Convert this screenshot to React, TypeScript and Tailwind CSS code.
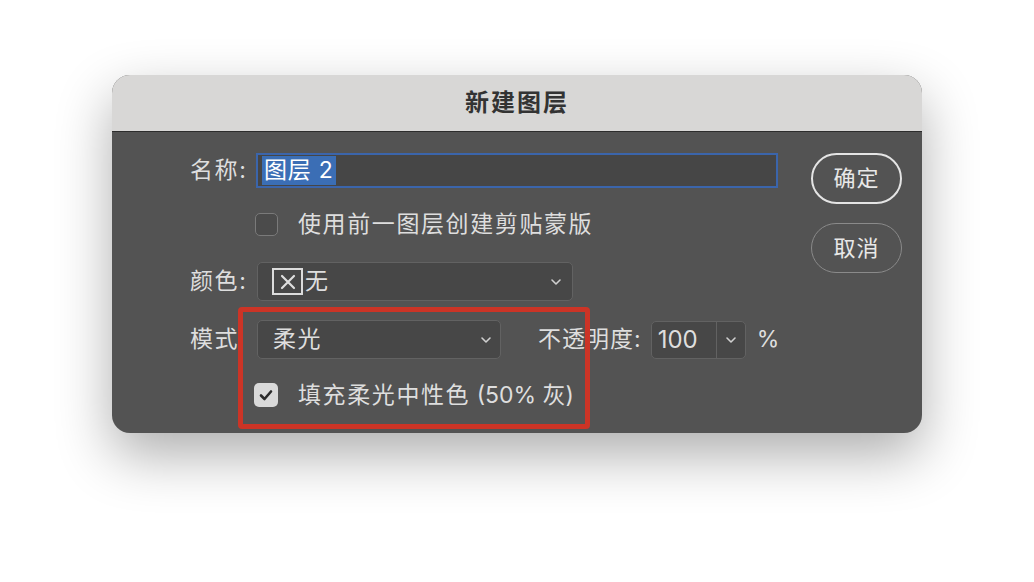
import React from "react";

const font = { fontFamily: '"Inter", "Noto Sans CJK SC", sans-serif' };

function Chevron({ className = "" }: { className?: string }) {
  return (
    <svg width="12" height="8" viewBox="0 0 12 8" className={className}>
      <path d="M2 2 L6 6 L10 2" fill="none" stroke="#d0d0d0" strokeWidth="1.6" strokeLinecap="round" strokeLinejoin="round" />
    </svg>
  );
}

export default function App() {
  return (
    <div className="w-[1034px] h-[582px] bg-white pt-[75px] pl-[112px]" style={font}>
      <div className="w-[810px] h-[358px] rounded-[18px] overflow-hidden bg-[#535353] shadow-[0_22px_55px_rgba(0,0,0,0.32)] flex flex-col">
        <div className="h-[57px] bg-[#d8d7d6] border-b border-[#2c2c2c] flex items-center justify-center">
          <span className="text-[24px] font-bold text-[#333333] tracking-[2px] leading-none">新建图层</span>
        </div>
        <div className="relative flex-1 flex pl-[78px] pr-[20px] pt-[21px]">
          <div className="w-[588px] flex flex-col text-[23px] tracking-[1.6px] text-[#dedede] leading-none whitespace-nowrap">
            {/* Row 1 */}
            <div className="flex items-center h-[35px]">
              <span className="w-[66px] shrink-0">名称:</span>
              <div className="w-[522px] h-[35px] border-2 border-[#3b65ab] bg-[#464646] flex items-stretch p-[1px] pl-[4px]">
                <span className="bg-[#3b6eb5] text-white flex items-center px-[2px] tracking-[0.8px]">图层 2</span>
              </div>
            </div>
            {/* Row 2 */}
            <div className="flex items-center mt-[25px] h-[23px] pl-[65px]">
              <div className="w-[23px] h-[23px] shrink-0 rounded-[5px] border-[1.5px] border-[#7a7a7a] bg-[#4b4b4b]" />
              <span className="ml-[20px]">使用前一图层创建剪贴蒙版</span>
            </div>
            {/* Row 3 */}
            <div className="flex items-center mt-[26px]">
              <span className="w-[67px] shrink-0">颜色:</span>
              <div className="w-[316px] h-[39px] rounded-[5px] border border-[#626262] bg-[#474747] flex items-center pl-[14px] pr-[10px]">
                <div className="w-[31px] h-[27px] border-2 border-[#dcdcdc] flex items-center justify-center">
                  <svg width="16" height="16" viewBox="0 0 16 16">
                    <path d="M2 2 L14 14 M14 2 L2 14" stroke="#dedede" strokeWidth="2.2" strokeLinecap="round" />
                  </svg>
                </div>
                <span className="ml-[2px]">无</span>
                <Chevron className="ml-auto" />
              </div>
            </div>
            {/* Row 4 */}
            <div className="flex items-center mt-[19px]">
              <span className="w-[67px] shrink-0">模式</span>
              <div className="w-[244px] h-[39px] shrink-0 rounded-[5px] border border-[#626262] bg-[#474747] flex items-center pl-[15px] pr-[8px]">
                <span>柔光</span>
                <Chevron className="ml-auto" />
              </div>
              <span className="ml-[37px] shrink-0 tracking-[1px]">不透明度:</span>
              <div className="ml-[9px] w-[95px] h-[38px] shrink-0 rounded-[5px] border border-[#626262] bg-[#474747] flex items-stretch">
                <span className="w-[64px] flex items-center pl-[6px] tracking-normal text-[24px]">100</span>
                <div className="flex-1 border-l border-[#626262] flex items-center justify-center">
                  <Chevron />
                </div>
              </div>
              <span className="ml-[11px] tracking-normal">%</span>
            </div>
            {/* Row 5 */}
            <div className="flex items-center mt-[24px] h-[24px] pl-[64px]">
              <div className="w-[24px] h-[24px] shrink-0 rounded-[5px] bg-[#d9d9d9] flex items-center justify-center">
                <svg width="14" height="12" viewBox="0 0 14 12">
                  <path d="M2 6.5 L5.5 10 L12 2.5" fill="none" stroke="#2b2b2b" strokeWidth="2.6" strokeLinecap="round" strokeLinejoin="round" />
                </svg>
              </div>
              <span className="ml-[20px]">
                {"填充柔光中性色"}
                <span className="tracking-normal">{" (50% 灰)"}</span>
              </span>
            </div>
          </div>
          <div className="ml-[33px] flex flex-col gap-[19px] text-[22px] tracking-[1px] text-[#e8e8e8]">
            <div className="w-[91px] h-[51px] rounded-full border-2 border-[#e4e4e4] flex items-center justify-center">确定</div>
            <div className="w-[91px] h-[50px] rounded-full border-[1.5px] border-[#8a8a8a] flex items-center justify-center">取消</div>
          </div>
          <div className="absolute left-[126px] top-[175px] w-[352px] h-[122px] border-[5px] border-[#cc3426] rounded-[4px] pointer-events-none" />
        </div>
      </div>
    </div>
  );
}
